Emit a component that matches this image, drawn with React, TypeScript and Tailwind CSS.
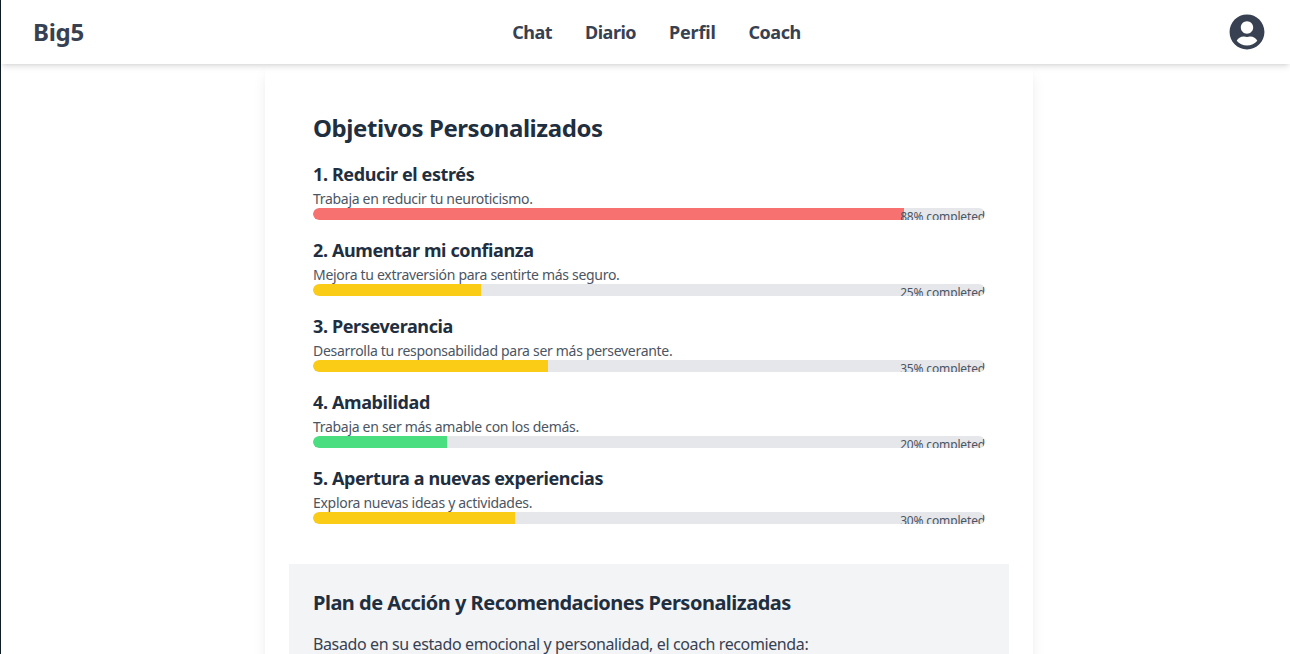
import React from 'react';
import { FaUserCircle } from 'react-icons/fa';

interface Goal {
  title: string;
  text: string;
  percent: number;
  color: string;
}

const goals: Goal[] = [
  { title: '1. Reducir el estrés', text: 'Trabaja en reducir tu neuroticismo.', percent: 88, color: 'bg-[#f87171]' },
  { title: '2. Aumentar mi confianza', text: 'Mejora tu extraversión para sentirte más seguro.', percent: 25, color: 'bg-[#facc15]' },
  { title: '3. Perseverancia', text: 'Desarrolla tu responsabilidad para ser más perseverante.', percent: 35, color: 'bg-[#facc15]' },
  { title: '4. Amabilidad', text: 'Trabaja en ser más amable con los demás.', percent: 20, color: 'bg-[#4ade80]' },
  { title: '5. Apertura a nuevas experiencias', text: 'Explora nuevas ideas y actividades.', percent: 30, color: 'bg-[#facc15]' },
];

const GoalRow: React.FC<{ goal: Goal }> = ({ goal }) => (
  <div className="h-[76px]">
    <h3 className="text-[18px] leading-7 font-bold text-[#1f2f3f] tracking-[-0.38px]">{goal.title}</h3>
    <p className="mt-[1px] h-[19px] text-sm leading-5 text-[#4b5563] tracking-[-0.3px]">{goal.text}</p>
    <div className="relative h-3 w-full overflow-hidden rounded-full bg-[#e5e7eb]">
      <div className={`h-full rounded-l-full ${goal.color}`} style={{ width: `${goal.percent}%` }} />
      <span className="absolute right-0 top-[1px] text-xs leading-4 text-[#4b5563] tracking-[-0.15px] whitespace-nowrap">
        {goal.percent}% completed
      </span>
    </div>
  </div>
);

export default function App() {
  return (
    <div className="flex h-[654px] overflow-hidden bg-white font-['Noto_Sans',sans-serif]">
      <div className="w-px shrink-0 bg-[#0f1c26]" />
      <div className="flex min-w-0 flex-1 flex-col">
        <nav className="relative z-10 flex h-16 shrink-0 items-center justify-between bg-white px-8 shadow-md">
          <span className="text-2xl font-bold text-[#374151] tracking-[-0.3px]">Big5</span>
          <div className="flex items-center gap-[33px] text-lg font-bold text-[#374151] tracking-[-0.5px]">
            <a>Chat</a>
            <a>Diario</a>
            <a className="tracking-[-0.2px]">Perfil</a>
            <a>Coach</a>
          </div>
          <FaUserCircle className="mr-[-7px] text-[#374151]" size={36} />
        </nav>
        <main className="flex flex-1 justify-center">
          <div className="ml-[7px] w-3xl bg-white p-6 shadow-lg">
            <section className="h-[476px] px-6 pt-6">
              <h2 className="mb-4 text-2xl leading-8 font-bold text-[#1f2f3f] tracking-[-0.43px]">Objetivos Personalizados</h2>
              {goals.map((goal) => (
                <GoalRow key={goal.title} goal={goal} />
              ))}
            </section>
            <section className="bg-[#f3f4f6] p-6">
              <h2 className="mt-px mb-[15px] text-xl leading-7 font-bold text-[#1f2f3f] tracking-[-0.5px]">
                Plan de Acción y Recomendaciones Personalizadas
              </h2>
              <p className="text-base leading-6 text-[#374151] tracking-[-0.38px]">
                Basado en su estado emocional y personalidad, el coach recomienda:
              </p>
            </section>
          </div>
        </main>
      </div>
    </div>
  );
}
